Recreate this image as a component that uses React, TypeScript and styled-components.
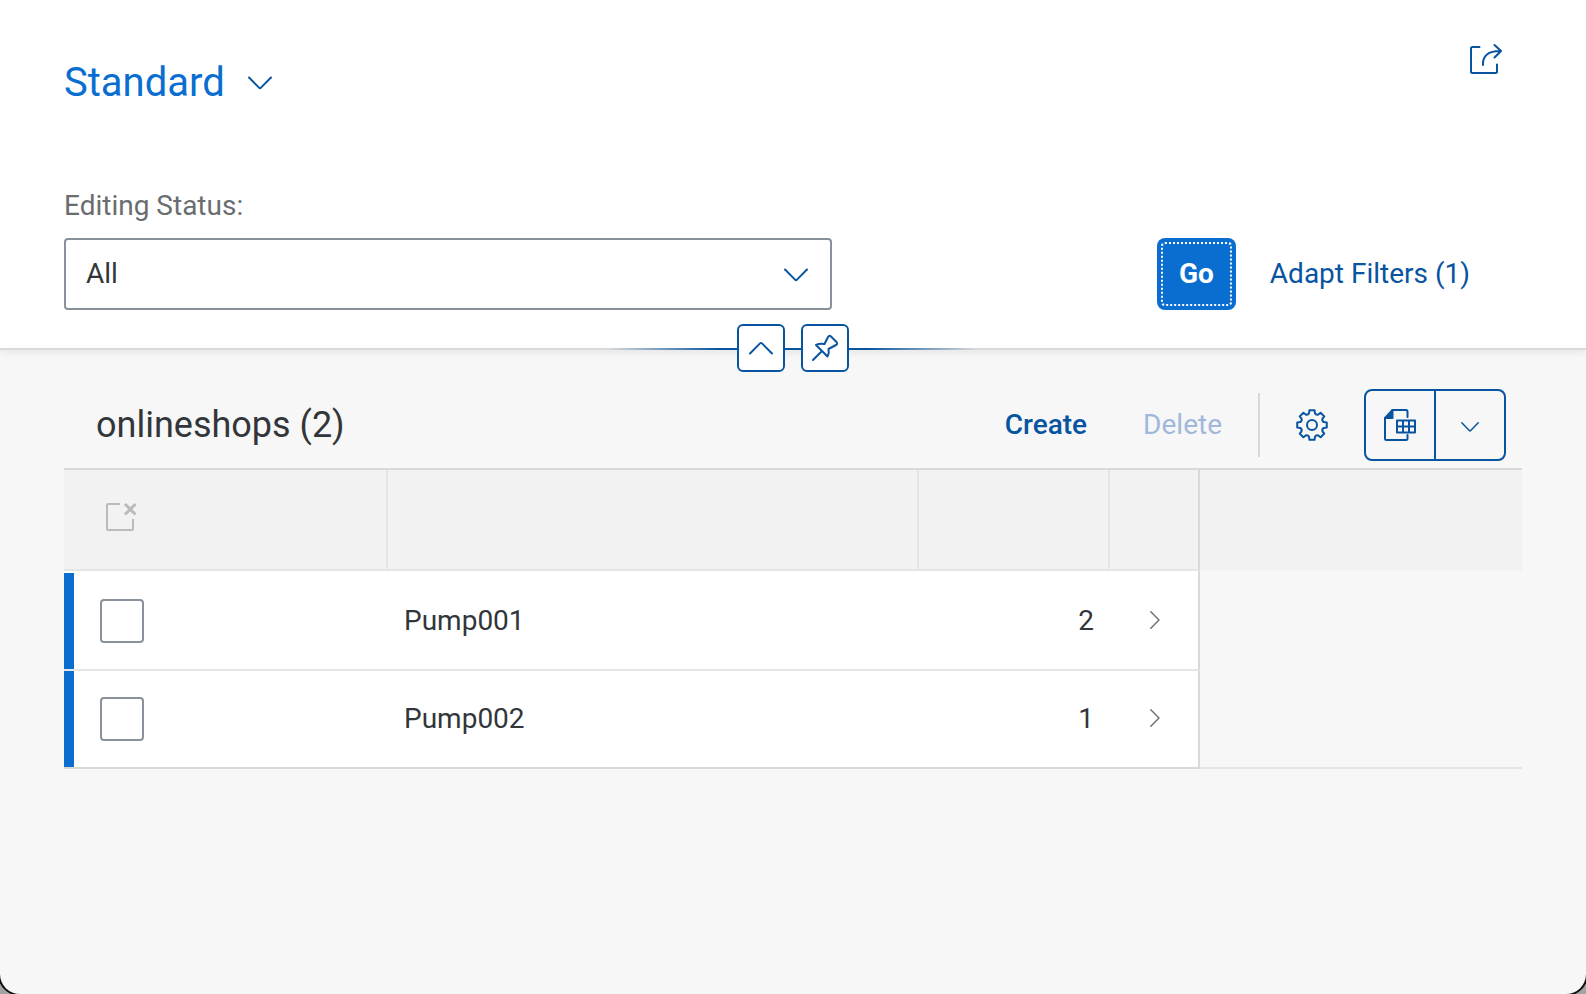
import React from "react";
import styled, { createGlobalStyle, css } from "styled-components";

const color = {
  brand: "#0a6ed1",
  action: "#0854a0",
  text: "#32363a",
  label: "#6a6d70",
  disabled: "#a1b7db",
  field: "#89919a",
  page: "#f7f7f7",
  head: "#f2f2f2",
  line: "#e5e5e5",
  strongLine: "#d9d9d9",
};

const GlobalStyle = createGlobalStyle`
  *, *::before, *::after { box-sizing: border-box; }
  body {
    margin: 0;
    background: #a3a3a3;
    color: ${color.text};
    font-family: Roboto, "Liberation Sans", sans-serif;
    font-size: 28px;
    line-height: 32px;
  }
  button, select, input { font: inherit; color: inherit; margin: 0; }
  button { cursor: pointer; }
`;

const Window = styled.div`
  display: flex;
  flex-direction: column;
  min-height: 100vh;
  background: ${color.page};
  border-radius: 0 0 20px 20px;
  box-shadow: 0 0 0 2px #111;
  overflow: hidden;
`;

const Header = styled.header`
  position: relative;
  background: #fff;
  padding: 23px 64px 38px;
  border-bottom: 2px solid ${color.strongLine};
  box-shadow: 0 2px 8px rgba(0, 0, 0, 0.08);
`;

const TitleRow = styled.div`
  display: flex;
  justify-content: space-between;
  align-items: flex-start;
`;

const VariantButton = styled.button`
  display: flex;
  align-items: center;
  gap: 23px;
  margin-top: 36px;
  padding: 0;
  border: 0;
  background: none;
  color: ${color.action};
`;

const VariantTitle = styled.span`
  color: ${color.brand};
  font-size: 40px;
  line-height: 48px;
`;

const IconButton = styled.button`
  display: grid;
  place-items: center;
  width: 72px;
  height: 72px;
  padding: 0;
  border: 0;
  background: none;
  color: ${color.action};
`;

const FilterBar = styled.form`
  display: flex;
  align-items: flex-end;
  justify-content: space-between;
  gap: 32px;
  margin-top: 83px;
`;

const Field = styled.div`
  display: flex;
  flex-direction: column;
  flex: 0 1 768px;
  gap: 16px;
`;

const Label = styled.label`
  color: ${color.label};
`;

const SelectBox = styled.div`
  position: relative;
  display: grid;

  svg {
    position: absolute;
    right: 24px;
    top: 30px;
    color: ${color.action};
    pointer-events: none;
  }
`;

const Select = styled.select`
  appearance: none;
  height: 72px;
  padding: 0 64px 0 20px;
  border: 2px solid ${color.field};
  border-radius: 4px;
  background: #fff;
`;

const FilterActions = styled.div`
  display: flex;
  gap: 14px;
  padding-right: 32px;
`;

const GoButton = styled.button`
  height: 72px;
  padding: 0 22px;
  border: 0;
  border-radius: 8px;
  background: ${color.brand};
  color: #fff;
  font-weight: 700;
  outline: 2px dotted #fff;
  outline-offset: -6px;
`;

const TextButton = styled.button<{ $strong?: boolean }>`
  height: 72px;
  padding: 0 20px;
  border: 0;
  background: none;
  color: ${color.action};
  font-weight: ${(p) => (p.$strong ? 500 : 400)};
  white-space: nowrap;

  &:disabled {
    color: ${color.disabled};
    cursor: default;
  }
`;

const HeaderToggles = styled.div`
  position: absolute;
  left: 50%;
  bottom: -24px;
  display: flex;
  justify-content: center;
  gap: 16px;
  width: 368px;
  transform: translateX(-50%);
  background: linear-gradient(
      to right,
      transparent,
      ${color.action} 30%,
      ${color.action} 70%,
      transparent
    )
    0 24px / 100% 2px no-repeat;
`;

const ToggleButton = styled.button`
  display: grid;
  place-items: center;
  width: 48px;
  height: 48px;
  padding: 0;
  border: 2px solid ${color.action};
  border-radius: 6px;
  background: #fff;
  color: ${color.action};
`;

const Content = styled.main`
  padding: 38px 64px 64px;
`;

const Toolbar = styled.div`
  display: flex;
  align-items: center;
  justify-content: space-between;
  height: 80px;
  padding: 0 16px 6px 32px;
`;

const ListTitle = styled.h2`
  margin: 0;
  font-size: 36px;
  font-weight: 400;
  line-height: 40px;
`;

const ToolbarActions = styled.div`
  display: flex;
  align-items: center;
  gap: 16px;
`;

const Separator = styled.span`
  width: 2px;
  height: 64px;
  background: ${color.strongLine};
`;

const SplitButton = styled.div`
  display: flex;
  border: 2px solid ${color.action};
  border-radius: 8px;
`;

const SplitPart = styled(IconButton)`
  width: 68px;
  height: 68px;

  & + & {
    width: 70px;
    border-left: 2px solid ${color.action};
  }
`;

const Grid = styled.table`
  width: 100%;
  table-layout: fixed;
  border-collapse: separate;
  border-spacing: 0;
  border-top: 2px solid ${color.strongLine};
`;

const Col = styled.col<{ $width?: number }>`
  ${(p) => p.$width && css`width: ${p.$width}px;`}
`;

const HeadCell = styled.th<{ $last?: boolean; $filler?: boolean }>`
  height: 101px;
  padding: 0 0 8px;
  background: ${color.head};
  text-align: left;
  border-right: ${(p) =>
    p.$filler ? "0" : `2px solid ${p.$last ? color.strongLine : color.line}`};
  border-bottom: 2px solid ${(p) => (p.$filler ? color.head : color.line)};
`;

const DeselectButton = styled.button`
  display: grid;
  place-items: center;
  width: 32px;
  height: 32px;
  margin-left: 41px;
  padding: 0;
  border: 0;
  background: none;
  color: #bbb;
`;

const SpacerCell = styled.td<{ $filler?: boolean }>`
  height: 2px;
  padding: 0;
  background: ${(p) => (p.$filler ? "transparent" : "#fff")};
  border-right: ${(p) => (p.$filler ? "0" : `2px solid ${color.strongLine}`)};
`;

const Row = styled.tr`
  &:last-child td { border-bottom-color: ${color.strongLine}; }
  &:last-child td:last-child { border-bottom-color: ${color.line}; }
`;

const Cell = styled.td<{ $marked?: boolean; $end?: boolean; $last?: boolean }>`
  height: 98px;
  padding: 0 16px;
  background: #fff;
  border-bottom: 2px solid ${color.line};
  text-align: ${(p) => (p.$end ? "right" : "left")};
  ${(p) =>
    p.$marked &&
    css`
      padding-left: 36px;
      background: linear-gradient(${color.brand}, ${color.brand}) left / 10px 100%
        no-repeat padding-box #fff;
    `}
  ${(p) =>
    p.$last &&
    css`
      padding: 0 0 2px 29px;
      border-right: 2px solid ${color.strongLine};
    `}
`;

const FillerCell = styled.td`
  border-bottom: 2px solid transparent;
`;

const Checkbox = styled.input`
  appearance: none;
  display: block;
  width: 44px;
  height: 44px;
  border: 2px solid ${color.field};
  border-radius: 4px;
  background: #fff;
`;

const NavButton = styled.button`
  display: grid;
  place-items: center;
  width: 32px;
  height: 32px;
  padding: 0;
  border: 0;
  background: none;
  color: ${color.label};
`;

const stroke = {
  fill: "none",
  stroke: "currentColor",
  strokeWidth: 2,
  strokeLinecap: "round" as const,
  strokeLinejoin: "round" as const,
  "aria-hidden": true,
};

const ChevronDown = () => (
  <svg width="24" height="14" viewBox="0 0 24 14" {...stroke}>
    <path d="M1 1.5 11 11.6Q12 12.6 13 11.6L23 1.5" />
  </svg>
);

const ChevronUp = () => (
  <svg width="24" height="14" viewBox="0 0 24 14" {...stroke}>
    <path d="M1 12.5 11 2.4Q12 1.4 13 2.4L23 12.5" />
  </svg>
);

const SmallChevronDown = () => (
  <svg width="18" height="14" viewBox="0 0 18 14" {...stroke} strokeWidth={1.5}>
    <path d="M.8 4.8 8.3 12.5Q9 13.2 9.7 12.5L17.2 4.8" />
  </svg>
);

const ChevronRight = () => (
  <svg width="10" height="18" viewBox="0 0 10 18" {...stroke} strokeWidth={1.4}>
    <path d="M.8.8 9 9 .8 17.2" />
  </svg>
);

const ShareIcon = () => (
  <svg width="32" height="32" viewBox="0 0 32 32" {...stroke}>
    <path d="M9.5 4H2.5Q1 4 1 5.5V28.5Q1 30 2.5 30H25.5Q27 30 27 28.5V21.5" />
    <path d="M13 22C12.5 13 18 7.7 31 8M24.5 2 31 8 24.5 14.5" />
  </svg>
);

const PinIcon = () => (
  <svg width="28" height="28" viewBox="0 0 28 28" {...stroke}>
    <path d="M2 26 10 18" />
    <path d="M5 11Q9 9 13.5 10L17 3Q18 1 20 2.5L25.5 8Q27 10 25 11L17.5 15Q18.5 19 16.5 22.5Z" />
  </svg>
);

const GearIcon = () => {
  const teeth = Array.from({ length: 8 }, (_, i) => i * 45);
  const point = (radius: number, degrees: number) => {
    const a = (degrees * Math.PI) / 180;
    return `${(16 + radius * Math.sin(a)).toFixed(2)} ${(16 - radius * Math.cos(a)).toFixed(2)}`;
  };
  const d = teeth
    .map(
      (t, i) =>
        `${i ? "L" : "M"}${point(12.2, t - 14)}L${point(15, t - 10)}L${point(15, t + 10)}L${point(12.2, t + 14)}Q${point(10.6, t + 22.5)} ${point(12.2, t + 31)}`
    )
    .join("");
  return (
    <svg width="32" height="32" viewBox="0 0 32 32" {...stroke}>
      <path d={`${d}Z`} />
      <circle cx="16" cy="16" r="5" />
    </svg>
  );
};

const SpreadsheetIcon = () => (
  <svg width="32" height="32" viewBox="0 0 32 32" {...stroke}>
    <path d="M8.5 1H22Q23.5 1 23.5 2.5V8M1 9V29.5Q1 31 2.5 31H22Q23.5 31 23.5 29.5V26" />
    <path d="M1 9 8.5 1V9Z" fill="currentColor" />
    <path d="M13 11.5H31V23.5H13ZM13 17.5H31M19 11.5V23.5M25 11.5V23.5" />
  </svg>
);

const DeselectIcon = () => (
  <svg width="32" height="32" viewBox="0 0 32 32" {...stroke}>
    <path d="M15 4H3Q2 4 2 5V29Q2 30 3 30H27Q28 30 28 29V19" strokeLinecap="butt" />
    <path d="M20 4 30.5 14.5M30.5 4 20 14.5" strokeWidth="3" strokeLinecap="butt" />
  </svg>
);

const shops = [
  { name: "Pump001", count: 2 },
  { name: "Pump002", count: 1 },
];

export default function App() {
  return (
    <>
      <GlobalStyle />
      <Window>
        <Header>
          <TitleRow>
            <VariantButton type="button">
              <VariantTitle>Standard</VariantTitle>
              <ChevronDown />
            </VariantButton>
            <IconButton type="button" aria-label="Share">
              <ShareIcon />
            </IconButton>
          </TitleRow>
          <FilterBar onSubmit={(e) => e.preventDefault()}>
            <Field>
              <Label htmlFor="editing-status">Editing Status:</Label>
              <SelectBox>
                <Select id="editing-status" defaultValue="All">
                  <option>All</option>
                </Select>
                <ChevronDown />
              </SelectBox>
            </Field>
            <FilterActions>
              <GoButton type="submit">Go</GoButton>
              <TextButton type="button">Adapt Filters (1)</TextButton>
            </FilterActions>
          </FilterBar>
          <HeaderToggles>
            <ToggleButton type="button" aria-label="Collapse header">
              <ChevronUp />
            </ToggleButton>
            <ToggleButton type="button" aria-label="Pin header">
              <PinIcon />
            </ToggleButton>
          </HeaderToggles>
        </Header>

        <Content>
          <Toolbar>
            <ListTitle>onlineshops (2)</ListTitle>
            <ToolbarActions>
              <TextButton type="button" $strong>Create</TextButton>
              <TextButton type="button" disabled>Delete</TextButton>
              <Separator />
              <IconButton type="button" aria-label="Settings">
                <GearIcon />
              </IconButton>
              <SplitButton>
                <SplitPart type="button" aria-label="Export to spreadsheet">
                  <SpreadsheetIcon />
                </SplitPart>
                <SplitPart type="button" aria-label="Export options">
                  <SmallChevronDown />
                </SplitPart>
              </SplitButton>
            </ToolbarActions>
          </Toolbar>

          <Grid aria-label="onlineshops">
            <colgroup>
              <Col $width={324} />
              <Col $width={531} />
              <Col $width={191} />
              <Col $width={90} />
              <Col />
            </colgroup>
            <thead>
              <tr>
                <HeadCell>
                  <DeselectButton type="button" aria-label="Deselect all">
                    <DeselectIcon />
                  </DeselectButton>
                </HeadCell>
                <HeadCell />
                <HeadCell />
                <HeadCell $last />
                <HeadCell $filler />
              </tr>
            </thead>
            <tbody>
              <tr aria-hidden="true">
                <SpacerCell colSpan={4} />
                <SpacerCell $filler />
              </tr>
              {shops.map((shop) => (
                <Row key={shop.name}>
                  <Cell $marked>
                    <Checkbox type="checkbox" aria-label={`Select ${shop.name}`} />
                  </Cell>
                  <Cell>{shop.name}</Cell>
                  <Cell $end>{shop.count}</Cell>
                  <Cell $last>
                    <NavButton type="button" aria-label={`Open ${shop.name}`}>
                      <ChevronRight />
                    </NavButton>
                  </Cell>
                  <FillerCell />
                </Row>
              ))}
            </tbody>
          </Grid>
        </Content>
      </Window>
    </>
  );
}
